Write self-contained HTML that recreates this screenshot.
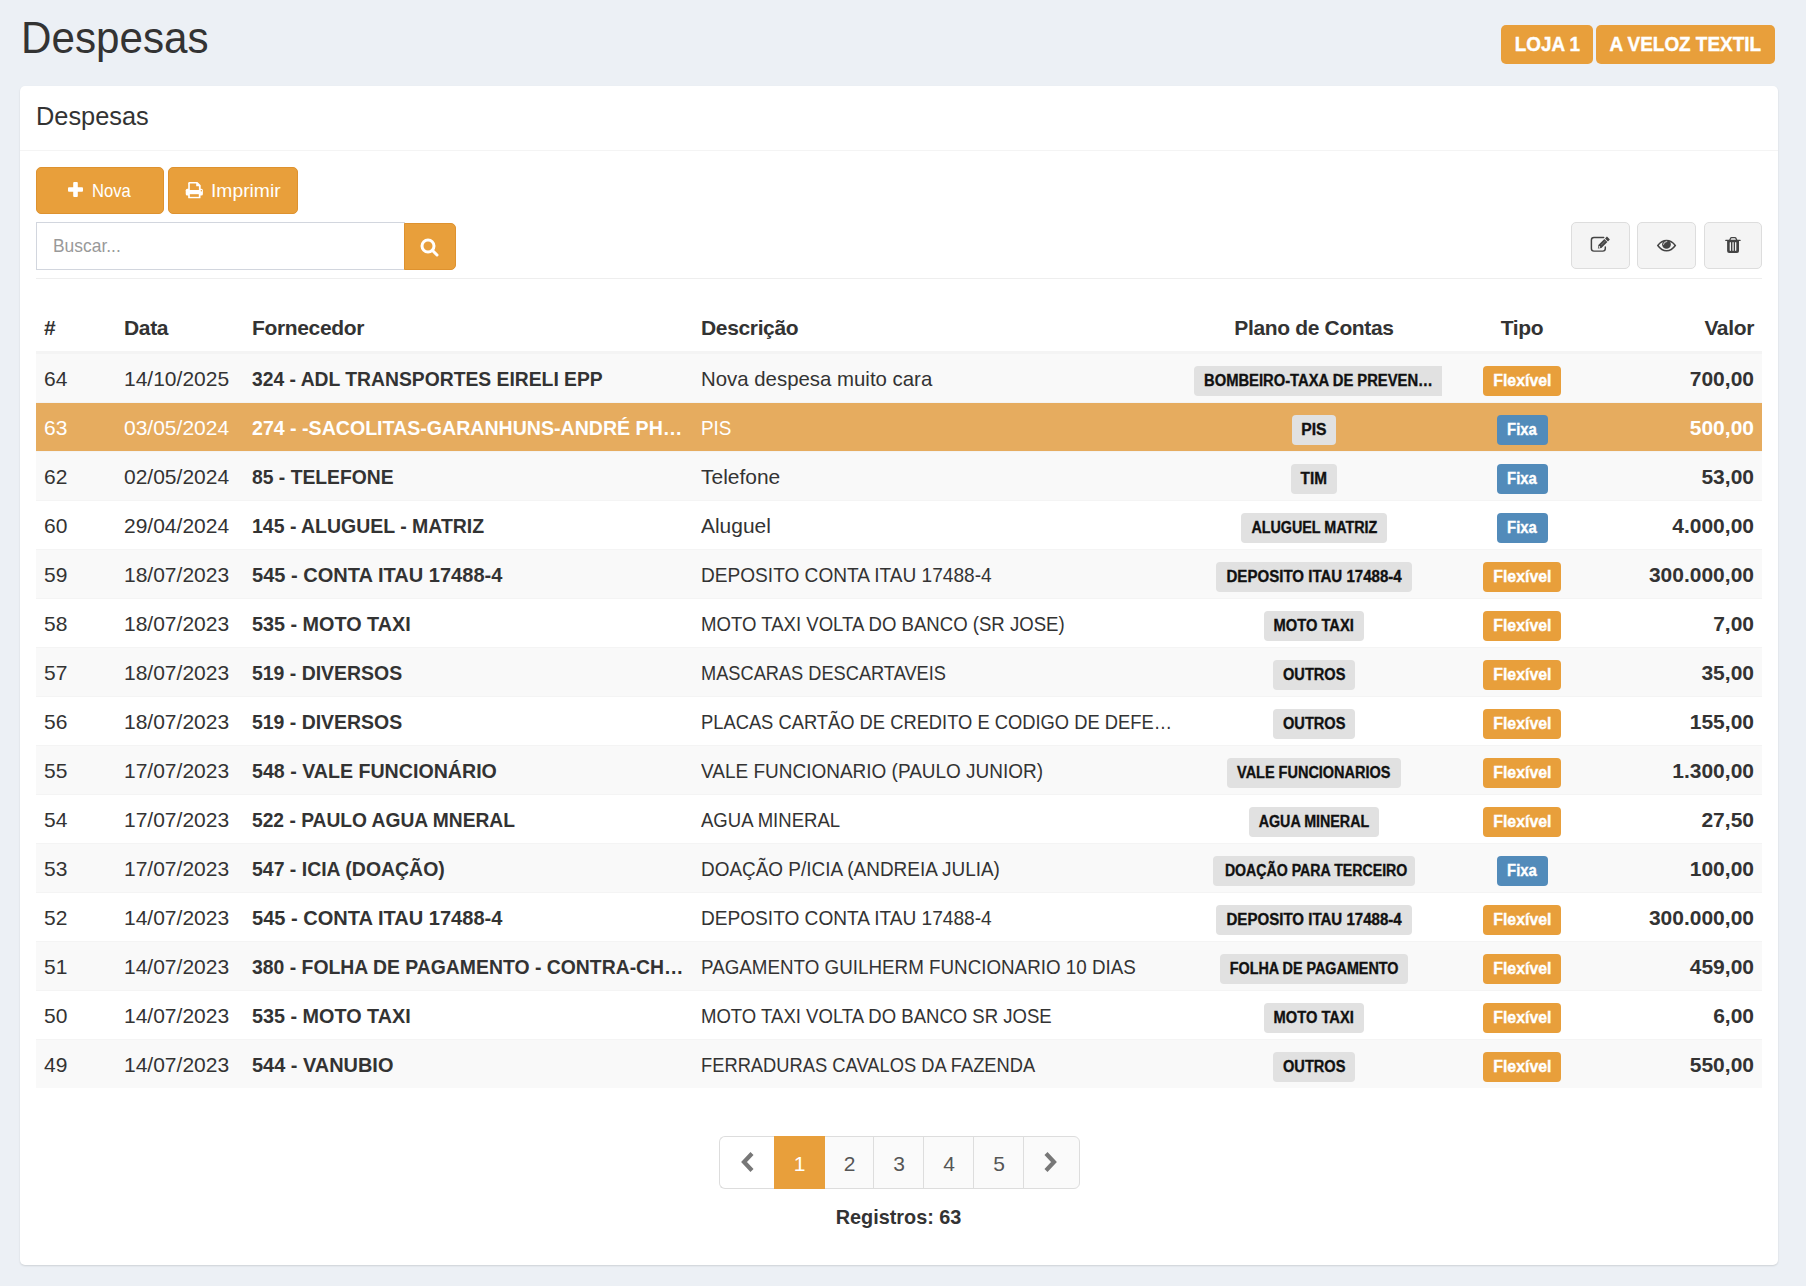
<!DOCTYPE html>
<html><head><meta charset="utf-8">
<style>
*{box-sizing:border-box;margin:0;padding:0}
html,body{width:1806px;height:1286px;overflow:hidden}
body{background:#ecf0f5;font-family:"Liberation Sans",sans-serif;color:#333;position:relative}
.abs{position:absolute}
.h1{left:21px;top:10px;font-size:44.5px;line-height:56px;color:#333;white-space:nowrap}
.h1 span{display:inline-block;transform-origin:left center}
.lbl{top:25px;height:39px;background:#e89f3b;color:#fff;font-weight:bold;font-size:21px;line-height:37px;border-radius:5px;text-align:center;white-space:nowrap}
.lbl span{display:inline-block;-webkit-text-stroke:0.4px #fff}
.card{left:20px;top:86px;width:1758px;height:1179px;background:#fff;border-radius:5px;box-shadow:0 1px 2px rgba(0,0,0,.13)}
.ctitle{left:36px;top:98px;font-size:26.5px;line-height:36px;color:#333;white-space:nowrap}
.ctitle span{display:inline-block;transform-origin:left center}
.hline{left:20px;top:150px;width:1758px;height:1px;background:#f4f4f4}
.btn{height:47px;top:167px;background:#e89f3b;border:1px solid #de922f;border-radius:5px;color:#fff}
.btxt{top:179px;font-size:18.2px;line-height:24px;color:#fff;white-space:nowrap}
.btxt span{display:inline-block;transform-origin:left center}
.input{left:36px;top:222px;width:369px;height:48px;border:1px solid #d2d6de;background:#fff}
.ph{left:53px;top:234px;font-size:19px;line-height:24px;color:#999;white-space:nowrap}
.sbtn{left:404px;top:223px;width:52px;height:47px;background:#e89f3b;border:1px solid #de922f;border-radius:0 5px 5px 0}
.ibtn{top:222px;width:59px;height:47px;background:#f4f4f4;border:1px solid #ddd;border-radius:5px}
.sep{left:36px;top:278px;width:1726px;height:1px;background:#eee}
svg{position:absolute;overflow:visible}
table{position:absolute;left:36px;top:303px;width:1726px;border-collapse:separate;border-spacing:0;table-layout:fixed}
th{height:50px;padding:2px 8px 0;line-height:44px;font-size:21px;font-weight:bold;text-align:left;border-bottom:2px solid #f4f4f4;white-space:nowrap;letter-spacing:-0.35px}
td{height:49px;line-height:44px;padding:3px 8px 0;vertical-align:top;font-size:21px;border-top:1px solid #f4f4f4;white-space:nowrap;overflow:visible}
tbody tr:nth-child(odd) td{background:#f9f9f9}
tr.sel td{background:#e6ac5f !important;color:#fff}
td.b{font-weight:bold}
.s{display:inline-block;transform-origin:left center}
.t{display:inline-block;transform-origin:center center}
.c{text-align:center}
.r{text-align:right;font-weight:bold}
.bg,.bo,.bb{-webkit-text-stroke:0.35px currentColor;display:inline-block;font-weight:bold;font-size:16px;line-height:29.5px;height:29.5px;border-radius:4px;vertical-align:baseline;text-align:center;position:relative;top:0;white-space:nowrap;overflow:visible}
.bg{background:#e1e1e1;color:#111}
.bomb{border-radius:4px 0 0 4px;text-align:left;padding-left:10px}
.bomb .t{transform-origin:left center}
.bo{background:#e89f3b;color:#fff;width:77.5px}
.bb{background:#528bba;color:#fff;width:51px}
.pgi{top:1136px;height:53px;padding-top:3px;line-height:48px;text-align:center;font-size:21px;color:#555;background:#fafafa;border:1px solid #ddd;border-right:0}
.reg{left:0;width:1798px;top:1203px;text-align:center;font-size:21px;font-weight:bold;line-height:28px}

</style></head>
<body>
<div class="abs h1"><span style="transform:scaleX(0.948)">Despesas</span></div>
<div class="abs lbl" style="left:1501px;width:92px"><span style="transform:scaleX(0.90)">LOJA 1</span></div>
<div class="abs lbl" style="left:1596px;width:179px"><span style="transform:scaleX(0.90)">A VELOZ TEXTIL</span></div>

<div class="abs card"></div>
<div class="abs ctitle"><span style="transform:scaleX(0.957)">Despesas</span></div>
<div class="abs hline"></div>

<div class="abs btn" style="left:36px;width:128px"></div>
<div class="abs btn" style="left:168px;width:130px"></div>
<svg style="left:68px;top:182px" width="15" height="15" viewBox="0 0 15 15"><rect x="5.2" y="0" width="4.6" height="15" rx="1" fill="#fff"/><rect x="0" y="5.2" width="15" height="4.6" rx="1" fill="#fff"/></svg>
<div class="abs btxt" style="left:92px"><span style="transform:scaleX(0.914)">Nova</span></div>
<svg style="left:182px;top:178px" width="26" height="24" viewBox="0 0 26 24"><rect x="3.73" y="10.8" width="17.17" height="6.7" rx="1.5" fill="#fff"/><path d="M6.2 11.9V5.2Q6.2 4 7.4 4H15.4L18.7 7.3V11.9Z" fill="#fff"/><path d="M7.84 11.9V5.41H14.2V8.3H16.9V11.9Z" fill="#e89f3b"/><circle cx="19.4" cy="12.7" r="0.75" fill="#e89f3b"/><rect x="6.16" y="15.9" width="12.34" height="4.4" rx="0.6" fill="#fff"/><rect x="7.84" y="16.2" width="8.96" height="2.65" fill="#e89f3b"/></svg>
<div class="abs btxt" style="left:211px"><span style="transform:scaleX(1.06)">Imprimir</span></div>

<div class="abs input"></div>
<div class="abs ph"><span style="display:inline-block;transform-origin:left center;transform:scaleX(0.917)">Buscar...</span></div>
<div class="abs sbtn"></div>
<svg style="left:420px;top:238px" width="20" height="20" viewBox="0 0 20 20"><circle cx="8" cy="8" r="6" fill="none" stroke="#fff" stroke-width="3"/><line x1="12.3" y1="12.3" x2="17" y2="17" stroke="#fff" stroke-width="3" stroke-linecap="round"/></svg>

<div class="abs ibtn" style="left:1571px"></div>
<div class="abs ibtn" style="left:1637px"></div>
<div class="abs ibtn" style="left:1704px;width:58px"></div>
<svg style="left:1586px;top:232px" width="28" height="24" viewBox="0 0 28 24"><path d="M17.7 5.4H8Q5.4 5.4 5.4 8V16.5Q5.4 19.1 8 19.1H16.7Q19.3 19.1 19.3 16.5V15" fill="none" stroke="#444" stroke-width="1.45" stroke-linecap="round"/><g transform="translate(11.9,16.5) rotate(-45)"><path d="M0 0L2.8 -2.1H11.3V2.1H2.8Z" fill="#444"/><rect x="12.1" y="-2.1" width="2.8" height="4.2" rx="0.4" fill="#444"/><circle cx="2.1" cy="0" r="0.85" fill="#f4f4f4"/><rect x="4.5" y="-0.5" width="6" height="0.9" fill="#777"/></g></svg>
<svg style="left:1653px;top:235px" width="28" height="21" viewBox="0 0 28 21"><path d="M4.8 10.45C7.5 6.9 10.5 5.5 13.55 5.5C16.6 5.5 19.6 6.9 22.3 10.45C19.6 14.2 16.6 15.7 13.55 15.7C10.5 15.7 7.5 14.2 4.8 10.45Z" fill="none" stroke="#444" stroke-width="1.5"/><circle cx="13.47" cy="9.39" r="4.35" fill="#444"/><path d="M10.5 9.4Q10.9 7.2 13.8 6.4" fill="none" stroke="#b8b8b8" stroke-width="1.1" stroke-linecap="round"/></svg>
<svg style="left:1720px;top:233px" width="26" height="24" viewBox="0 0 26 24"><path d="M9.7 7.2L10.8 4.9Q11 4.65 11.4 4.65H15.1Q15.5 4.65 15.7 4.9L16.8 7.2" fill="none" stroke="#444" stroke-width="1.3"/><rect x="5.2" y="6.8" width="15.5" height="1.2" rx="0.6" fill="#444"/><path d="M7.1 7.8H19V18Q19 20 17 20H9.1Q7.1 20 7.1 18Z" fill="#444"/><rect x="9.7" y="9" width="1.3" height="8.9" rx="0.65" fill="#f4f4f4"/><rect x="12.4" y="9" width="1.3" height="8.9" rx="0.65" fill="#f4f4f4"/><rect x="15" y="9" width="1.3" height="8.9" rx="0.65" fill="#f4f4f4"/></svg>

<div class="abs sep"></div>

<table>
<colgroup><col style="width:80px"><col style="width:128px"><col style="width:449px"><col style="width:486px"><col style="width:270px"><col style="width:146px"><col style="width:167px"></colgroup>
<thead><tr><th>#</th><th>Data</th><th>Fornecedor</th><th>Descrição</th><th class="c">Plano de Contas</th><th class="c">Tipo</th><th style="text-align:right">Valor</th></tr></thead>
<tbody>
<tr><td>64</td><td>14/10/2025</td><td class="b"><span class="s" style="transform:scaleX(0.9192)">324 - ADL TRANSPORTES EIRELI EPP</span></td><td><span class="s" style="transform:scaleX(0.9710)">Nova despesa muito cara</span></td><td class="c"><span class="bg bomb" style="width:248px;left:4px"><span class="t" style="transform:scaleX(0.9225)">BOMBEIRO-TAXA DE PREVEN…</span></span></td><td class="c"><span class="bo"><span class="t" style="transform:scaleX(0.9918)">Flexível</span></span></td><td class="r">700,00</td></tr>
<tr class="sel"><td>63</td><td>03/05/2024</td><td class="b"><span class="s" style="transform:scaleX(0.9323)">274 - -SACOLITAS-GARANHUNS-ANDRÉ PH…</span></td><td><span class="s" style="transform:scaleX(0.8980)">PIS</span></td><td class="c"><span class="bg" style="width:44.5px"><span class="t" style="transform:scaleX(0.9816)">PIS</span></span></td><td class="c"><span class="bb"><span class="t" style="transform:scaleX(0.9299)">Fixa</span></span></td><td class="r">500,00</td></tr>
<tr><td>62</td><td>02/05/2024</td><td class="b"><span class="s" style="transform:scaleX(0.9195)">85 - TELEFONE</span></td><td><span class="s" style="transform:scaleX(0.9983)">Telefone</span></td><td class="c"><span class="bg" style="width:46.5px"><span class="t" style="transform:scaleX(0.9562)">TIM</span></span></td><td class="c"><span class="bb"><span class="t" style="transform:scaleX(0.9299)">Fixa</span></span></td><td class="r">53,00</td></tr>
<tr><td>60</td><td>29/04/2024</td><td class="b"><span class="s" style="transform:scaleX(0.9268)">145 - ALUGUEL - MATRIZ</span></td><td><span class="s" style="transform:scaleX(0.9973)">Aluguel</span></td><td class="c"><span class="bg" style="width:146.7px"><span class="t" style="transform:scaleX(0.8951)">ALUGUEL MATRIZ</span></span></td><td class="c"><span class="bb"><span class="t" style="transform:scaleX(0.9299)">Fixa</span></span></td><td class="r">4.000,00</td></tr>
<tr><td>59</td><td>18/07/2023</td><td class="b"><span class="s" style="transform:scaleX(0.9551)">545 - CONTA ITAU 17488-4</span></td><td><span class="s" style="transform:scaleX(0.9090)">DEPOSITO CONTA ITAU 17488-4</span></td><td class="c"><span class="bg" style="width:195.8px"><span class="t" style="transform:scaleX(0.9409)">DEPOSITO ITAU 17488-4</span></span></td><td class="c"><span class="bo"><span class="t" style="transform:scaleX(0.9918)">Flexível</span></span></td><td class="r">300.000,00</td></tr>
<tr><td>58</td><td>18/07/2023</td><td class="b"><span class="s" style="transform:scaleX(0.9423)">535 - MOTO TAXI</span></td><td><span class="s" style="transform:scaleX(0.8844)">MOTO TAXI VOLTA DO BANCO (SR JOSE)</span></td><td class="c"><span class="bg" style="width:100.8px"><span class="t" style="transform:scaleX(0.9175)">MOTO TAXI</span></span></td><td class="c"><span class="bo"><span class="t" style="transform:scaleX(0.9918)">Flexível</span></span></td><td class="r">7,00</td></tr>
<tr><td>57</td><td>18/07/2023</td><td class="b"><span class="s" style="transform:scaleX(0.9253)">519 - DIVERSOS</span></td><td><span class="s" style="transform:scaleX(0.8674)">MASCARAS DESCARTAVEIS</span></td><td class="c"><span class="bg" style="width:82.4px"><span class="t" style="transform:scaleX(0.9118)">OUTROS</span></span></td><td class="c"><span class="bo"><span class="t" style="transform:scaleX(0.9918)">Flexível</span></span></td><td class="r">35,00</td></tr>
<tr><td>56</td><td>18/07/2023</td><td class="b"><span class="s" style="transform:scaleX(0.9253)">519 - DIVERSOS</span></td><td><span class="s" style="transform:scaleX(0.8730)">PLACAS CARTÃO DE CREDITO E CODIGO DE DEFE…</span></td><td class="c"><span class="bg" style="width:82.4px"><span class="t" style="transform:scaleX(0.9118)">OUTROS</span></span></td><td class="c"><span class="bo"><span class="t" style="transform:scaleX(0.9918)">Flexível</span></span></td><td class="r">155,00</td></tr>
<tr><td>55</td><td>17/07/2023</td><td class="b"><span class="s" style="transform:scaleX(0.9340)">548 - VALE FUNCIONÁRIO</span></td><td><span class="s" style="transform:scaleX(0.9040)">VALE FUNCIONARIO (PAULO JUNIOR)</span></td><td class="c"><span class="bg" style="width:174.7px"><span class="t" style="transform:scaleX(0.9049)">VALE FUNCIONARIOS</span></span></td><td class="c"><span class="bo"><span class="t" style="transform:scaleX(0.9918)">Flexível</span></span></td><td class="r">1.300,00</td></tr>
<tr><td>54</td><td>17/07/2023</td><td class="b"><span class="s" style="transform:scaleX(0.9150)">522 - PAULO AGUA MNERAL</span></td><td><span class="s" style="transform:scaleX(0.8829)">AGUA MINERAL</span></td><td class="c"><span class="bg" style="width:130.9px"><span class="t" style="transform:scaleX(0.8920)">AGUA MINERAL</span></span></td><td class="c"><span class="bo"><span class="t" style="transform:scaleX(0.9918)">Flexível</span></span></td><td class="r">27,50</td></tr>
<tr><td>53</td><td>17/07/2023</td><td class="b"><span class="s" style="transform:scaleX(0.9265)">547 - ICIA (DOAÇÃO)</span></td><td><span class="s" style="transform:scaleX(0.9020)">DOAÇÃO P/ICIA (ANDREIA JULIA)</span></td><td class="c"><span class="bg" style="width:202.7px"><span class="t" style="transform:scaleX(0.8847)">DOAÇÃO PARA TERCEIRO</span></span></td><td class="c"><span class="bb"><span class="t" style="transform:scaleX(0.9299)">Fixa</span></span></td><td class="r">100,00</td></tr>
<tr><td>52</td><td>14/07/2023</td><td class="b"><span class="s" style="transform:scaleX(0.9551)">545 - CONTA ITAU 17488-4</span></td><td><span class="s" style="transform:scaleX(0.9090)">DEPOSITO CONTA ITAU 17488-4</span></td><td class="c"><span class="bg" style="width:195.8px"><span class="t" style="transform:scaleX(0.9409)">DEPOSITO ITAU 17488-4</span></span></td><td class="c"><span class="bo"><span class="t" style="transform:scaleX(0.9918)">Flexível</span></span></td><td class="r">300.000,00</td></tr>
<tr><td>51</td><td>14/07/2023</td><td class="b"><span class="s" style="transform:scaleX(0.9230)">380 - FOLHA DE PAGAMENTO - CONTRA-CH…</span></td><td><span class="s" style="transform:scaleX(0.8950)">PAGAMENTO GUILHERM FUNCIONARIO 10 DIAS</span></td><td class="c"><span class="bg" style="width:188.7px"><span class="t" style="transform:scaleX(0.8969)">FOLHA DE PAGAMENTO</span></span></td><td class="c"><span class="bo"><span class="t" style="transform:scaleX(0.9918)">Flexível</span></span></td><td class="r">459,00</td></tr>
<tr><td>50</td><td>14/07/2023</td><td class="b"><span class="s" style="transform:scaleX(0.9423)">535 - MOTO TAXI</span></td><td><span class="s" style="transform:scaleX(0.8831)">MOTO TAXI VOLTA DO BANCO SR JOSE</span></td><td class="c"><span class="bg" style="width:100.8px"><span class="t" style="transform:scaleX(0.9175)">MOTO TAXI</span></span></td><td class="c"><span class="bo"><span class="t" style="transform:scaleX(0.9918)">Flexível</span></span></td><td class="r">6,00</td></tr>
<tr><td>49</td><td>14/07/2023</td><td class="b"><span class="s" style="transform:scaleX(0.9491)">544 - VANUBIO</span></td><td><span class="s" style="transform:scaleX(0.8724)">FERRADURAS CAVALOS DA FAZENDA</span></td><td class="c"><span class="bg" style="width:82.4px"><span class="t" style="transform:scaleX(0.9118)">OUTROS</span></span></td><td class="c"><span class="bo"><span class="t" style="transform:scaleX(0.9918)">Flexível</span></span></td><td class="r">550,00</td></tr>
</tbody>
</table>
<div class="abs pgi" style="left:719px;width:56px;background:#fff;border-radius:6px 0 0 6px"></div>
<div class="abs pgi" style="left:824px;width:50px">2</div>
<div class="abs pgi" style="left:873px;width:51px">3</div>
<div class="abs pgi" style="left:923px;width:51px">4</div>
<div class="abs pgi" style="left:973px;width:51px">5</div>
<div class="abs pgi" style="left:1023px;width:57px;border-right:1px solid #ddd;border-radius:0 6px 6px 0"></div>
<div class="abs pgi" style="left:774px;width:51px;background:#e89f3b;border-color:#e89f3b;color:#fff;border-right:1px solid #e89f3b">1</div>
<svg style="left:740px;top:1151px" width="15" height="22" viewBox="0 0 15 22"><path d="M12 2.5L4 11L12 19.5" fill="none" stroke="#777" stroke-width="4.2"/></svg>
<svg style="left:1043px;top:1151px" width="15" height="22" viewBox="0 0 15 22"><path d="M3 2.5L11 11L3 19.5" fill="none" stroke="#777" stroke-width="4.2"/></svg>
<div class="abs reg"><span style="display:inline-block;transform:scaleX(0.945)">Registros: 63</span></div>

</body></html>
